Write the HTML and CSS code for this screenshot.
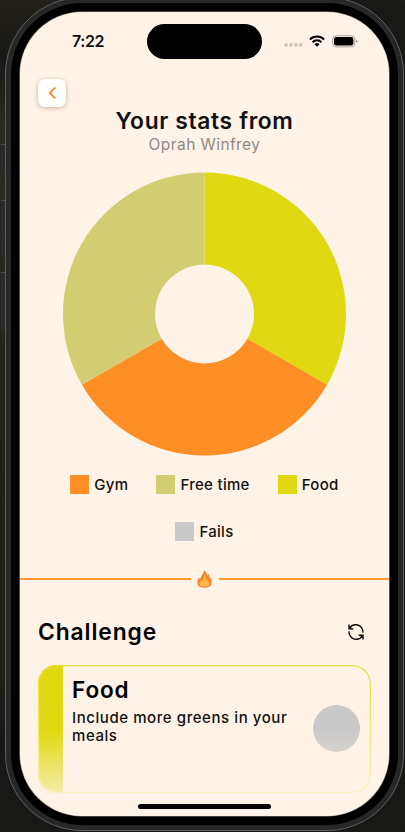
FILE: index.html
```html
<!DOCTYPE html>
<html lang="en">
<head>
<meta charset="utf-8">
<title>Your stats</title>
<link rel="stylesheet" href="styles.css">
</head>
<body>
<div class="side-button mute"></div>
<div class="side-button volume-up"></div>
<div class="side-button volume-down"></div>
<div class="phone"><div class="bezel"><main class="screen">
  <header class="status">
    <span class="time">7:22</span>
    <span class="island"></span>
    <span class="signals">
      <svg class="dots" width="19" height="5" viewBox="0 0 19 5"><g fill="#c9bfb5"><rect x=".5" y=".3" width="3.2" height="3.2" rx="1.2"/><rect x="5.4" y=".3" width="3.2" height="3.2" rx="1.2"/><rect x="10.3" y=".3" width="3.2" height="3.2" rx="1.2"/><rect x="15.2" y=".3" width="3.2" height="3.2" rx="1.2"/></g></svg>
      <svg class="wifi" width="16" height="12" viewBox="0 0 16 12"><g fill="none" stroke="#000" stroke-width="2"><path d="M.9 4.5a10 10 0 0 1 14.2 0"/><path d="M3.5 7.2a6.4 6.4 0 0 1 9 0"/></g><path d="M5.5 9.3a3.6 3.6 0 0 1 5 0L8 11.8z"/></svg>
      <svg class="battery" width="26" height="13" viewBox="0 0 26 13"><rect x=".6" y=".7" width="22.2" height="11.2" rx="3.6" fill="none" stroke="#aaa198"/><rect x="2" y="2" width="19.4" height="8.6" rx="2.4"/><path d="M24 4.5q1.5.5 1.5 1.8T24 8.1z" fill="#aaa198"/></svg>
    </span>
  </header>
  <button class="back" aria-label="Back"><svg width="10" height="14" viewBox="0 0 10 14"><path d="M8.2 1.6 2.8 7l5.4 5.4" fill="none" stroke="#f58a20" stroke-width="1.8"/></svg></button>
  <h1>Your stats from</h1>
  <p class="person">Oprah Winfrey</p>
  <svg class="chart" width="283" height="284" viewBox="-141.5 -142 283 284">
    <path fill="#e0d911" d="M0-141.5A141.5 141.5 0 0 1 122.54 70.75L42.87 24.75A49.5 49.5 0 0 0 0-49.5z"/>
    <path fill="#ff8e24" d="M122.54 70.75A141.5 141.5 0 0 1-122.54 70.75L-42.87 24.75A49.5 49.5 0 0 0 42.87 24.75z"/>
    <path fill="#d4cc70" d="M-122.54 70.75A141.5 141.5 0 0 1 0-141.5V-49.5A49.5 49.5 0 0 0-42.87 24.75z"/>
  </svg>
  <ul class="legend">
    <li><i class="gym"></i><span>Gym</span></li>
    <li><i class="free"></i><span>Free time</span></li>
    <li><i class="food"></i><span>Food</span></li>
    <li><i class="fails"></i><span>Fails</span></li>
  </ul>
  <div class="divider"><span class="rule"></span>
    <svg width="16" height="19" viewBox="0 0 16 19"><path fill="#f7842b" d="M1.5 17C-.4 14.5.6 11 2 8.4L3 10C3.8 7.3 6.7 5 7 1.3c2.2 1.4 3 3.5 3.1 5.4L11.7 5c.2 2 1.1 3.4 1.2 4.8l1-1.4c1.3 3.4 1.2 7-1 8.8-2.5 2-8.9 2-11.4-.2z"/><path fill="#ffb84a" d="M3.3 16.8C1.8 15 2.4 13 3.2 11.7l1 1.4C5 11.2 7 9.7 7.3 6.3c1.6 1.8 1.6 4.3 1.7 5.3l1.3-2.2c0 2.1.7 2.8.7 3.7l1-1c.8 1.8.6 3.7-.7 4.7-2 1.2-6.3 1.2-8 0z"/><circle cx="1.6" cy="1.4" r=".5" fill="#ffc477"/></svg>
    <span class="rule"></span></div>
  <section class="challenge">
    <h2>Challenge</h2>
    <svg width="18" height="18" viewBox="0 0 18 18"><g fill="none" stroke="#111" stroke-width="1.35"><path d="M2.7 4.8C5.8.2 13.2.8 15.4 6.2c.5 1.2.7 2.2.6 3.6"/><path d="M15.3 13.2C12.2 17.8 4.8 17.2 2.6 11.8 2.1 10.6 1.9 9.6 2 8.2"/><path d="M2 1.6v4.2h4.4M16 16.4v-4.2h-4.4"/></g><path d="M1.8 2.2v3.9h4zM16.2 15.8v-3.9h-4z" fill="#111"/></svg>
  </section>
  <article class="card">
    <div class="accent"></div>
    <div class="copy"><h3>Food</h3><p>Include more greens in your<br>meals</p></div>
    <div class="check"></div>
    <svg class="outline" width="333" height="128" viewBox="0 0 333 128"><defs><linearGradient id="edge" x2="0" y2="1"><stop stop-color="#e6de35"/><stop offset=".5" stop-color="#eee765"/><stop offset="1" stop-color="#fbefbd"/></linearGradient></defs><rect x=".65" y=".65" width="331.7" height="126.7" rx="18" fill="none" stroke="url(#edge)" stroke-width="1.3"/></svg>
  </article>
  <div class="home"></div>
</main></div></div>
</body>
</html>
```
FILE: styles.css
```css
* { box-sizing: border-box; }
body {
  margin: 0;
  height: 832px;
  overflow: hidden;
  position: relative;
  background: linear-gradient(#222019 0, #181916 60px, #2a2b20 125px, #28291e 230px, #20241b 400px, #1c2119 680px, #181816 740px);
  font-family: Inter, "Liberation Sans", sans-serif;
  color: #111;
}
h1, h2, h3, p, ul { margin: 0; padding: 0; }
svg { display: block; flex: none; }
.phone {
  width: 399px;
  height: 834px;
  margin: -3px 0 0 5px;
  border: 1px solid #606060;
  border-radius: 77px;
  background: #272727;
  padding: 5px;
  position: relative;
  box-shadow: 30px 0 0 10px #181816;
}
.bezel { height: 822px; padding: 9px; background: #000; border-radius: 71px; }
.screen {
  height: 804px;
  background: #fff3e7;
  border-radius: 62px;
  overflow: hidden;
  box-shadow: 0 0 0 .6px #8b857e;
  display: flex;
  flex-direction: column;
}
.side-button {
  position: absolute;
  left: 1px;
  width: 5px;
  background: #2b2b2b;
  border-top: 1px solid #494943;
}
.mute { top: 144px; height: 30px; }
.volume-up { top: 200px; height: 57px; }
.volume-down { top: 272px; height: 58px; }
.status { height: 47px; padding: 12px 31px 0 51px; display: flex; flex: none; }
.time { width: 76px; padding: 8px 0 0 1px; font-size: 16px; line-height: 19px; font-weight: 600; letter-spacing: -.4px; }
.island { width: 115px; height: 35px; background: #000; border-radius: 18px; }
.signals { display: flex; margin-left: 22px; padding-top: 11px; }
.dots { margin-top: 8px; }
.wifi { margin-left: 6px; }
.battery { margin-left: 7px; }
.back {
  width: 28px;
  height: 28px;
  flex: none;
  margin: 20px 0 0 18px;
  padding: 0;
  border: 0;
  border-radius: 7px;
  background: #fff;
  box-shadow: 0 1px 5px rgba(65, 35, 10, .32);
  display: grid;
  place-items: center;
}
h1 { text-align: center; font-size: 22.8px; font-weight: 600; line-height: 28px; letter-spacing: .65px; }
.person { text-align: center; font-size: 15.5px; line-height: 20px; letter-spacing: .42px; color: #8d8985; }
.chart { margin: 17px 0 0 43px; }
.legend {
  list-style: none;
  display: flex;
  flex-wrap: wrap;
  justify-content: center;
  gap: 27px 28px;
  padding: 18px 24px 0;
  font-size: 15px;
  font-weight: 500;
  letter-spacing: .3px;
}
.legend li { display: flex; align-items: center; gap: 5px; height: 20px; }
.legend i { width: 19px; height: 19px; }
.gym { background: #ff8e24; }
.free { background: #d4cc70; }
.food { background: #e0d911; }
.fails { background: #c9c9c9; }
.divider { height: 19px; margin-top: 28px; display: flex; align-items: center; gap: 6px; flex: none; }
.rule { flex: 1; height: 2px; background: #ff9833; }
.challenge { height: 30px; margin-top: 29px; padding: 0 24px 0 18px; display: flex; align-items: center; justify-content: space-between; flex: none; }
h2 { font-size: 22.8px; font-weight: 600; line-height: 30px; letter-spacing: .9px; color: #000; }
.card {
  width: 333px;
  height: 128px;
  flex: none;
  margin: 18px 0 0 18px;
  border-radius: 18px;
  position: relative;
  display: flex;
  overflow: hidden;
}
.accent { width: 25px; background: linear-gradient(#e0d911 52%, #f7ebaa); }
.outline { position: absolute; inset: 0; }
.copy { flex: 1; min-width: 0; padding: 11px 0 0 9px; }
h3 { font-size: 22.5px; line-height: 28px; font-weight: 600; letter-spacing: .9px; color: #000; }
.copy p { margin-top: 5px; font-size: 15px; line-height: 18px; font-weight: 500; letter-spacing: .57px; white-space: nowrap; }
.check { width: 47px; height: 47px; flex: none; margin: 40px 11px 0 0; border-radius: 50%; background: linear-gradient(#c9c9c9 50%, #d5d2ce); }
.home { width: 133px; height: 5px; flex: none; margin: 11px 0 0 118px; border-radius: 3px; background: #000; }
```
